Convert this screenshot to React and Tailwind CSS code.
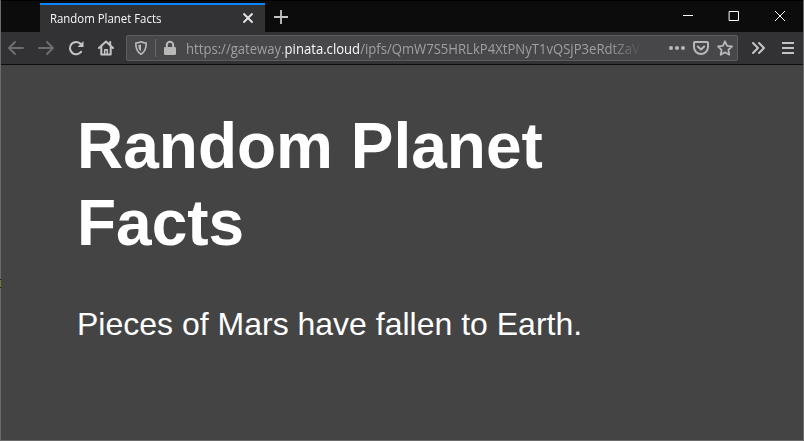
function Icon({ children, className = "" }) {
  return (
    <svg
      viewBox="0 0 16 16"
      width="16"
      height="16"
      fill="none"
      stroke="currentColor"
      strokeWidth="2"
      strokeLinecap="round"
      strokeLinejoin="round"
      className={`block shrink-0 ${className}`}
    >
      {children}
    </svg>
  );
}

function TabBar() {
  return (
    <div className="flex h-8 shrink-0 border-t border-black bg-[#0c0c0d] pl-[39px]">
      <div className="mt-0.5 flex w-[225px] items-center justify-between border-t-2 border-[#0a84ff] bg-[#323234] pr-[9px] pl-[10px]">
        <span className="w-[111px] whitespace-nowrap text-[12px] leading-4 text-[#f9f9fa]">
          <span className="inline-block origin-left scale-x-[0.95]">Random Planet Facts</span>
        </span>
        <Icon className="-mt-px text-[#e8e8e9]">
          <path d="M4 4l8 8M12 4l-8 8" strokeWidth="1.8" />
        </Icon>
      </div>
      <Icon className="mt-2 ml-2 text-[#c4c4c5]">
        <path d="M8 1v14M1 8h14" strokeLinecap="butt" strokeWidth="1.8" />
      </Icon>
      <div className="ml-auto flex text-white">
        <Icon className="mt-[7px] mr-[30px]">
          <path d="M3 7.5h10" strokeWidth="1" strokeLinecap="butt" />
        </Icon>
        <Icon className="mt-[7px] mr-[30px]">
          <path d="M3.5 3.5h9v9h-9z" strokeWidth="1" strokeLinejoin="miter" />
        </Icon>
        <Icon className="mt-[7px] mr-[15px]">
          <path d="M3 3l10 10M13 3L3 13" strokeWidth="1" strokeLinecap="butt" />
        </Icon>
      </div>
    </div>
  );
}

function UrlBar() {
  return (
    <div className="ml-[12px] flex h-[26px] w-[612px] items-center rounded-[2px] border border-[#5c5c5e] bg-[#474749] text-[#b8b8b9]">
      <Icon className="ml-[6px]">
        <path d="M8 1.8c1.6.8 3.3 1.1 5.2 1.2 0 5.200-1 9-5.200 11.200C3.800 12 2.800 8.200 2.800 3 4.700 2.900 6.400 2.600 8 1.800z" strokeWidth="1.7" />
        <path d="M8 4.500v7C6 10 5.300 8 5.200 5.200z" fill="currentColor" stroke="none" />
      </Icon>
      <div className="ml-[6px] h-[18px] w-px bg-[#69696b]" />
      <Icon className="ml-[6px]">
        <path d="M4.800 8V5a3.200 3.200 0 0 1 6.400 0v3" />
        <rect x="2" y="7" width="12" height="8" rx="1.300" fill="currentColor" stroke="none" />
      </Icon>
      <div className="ml-[8px] w-[456px] overflow-hidden pt-px whitespace-nowrap text-[14px] leading-5 text-[#a0a0a2] [mask-image:linear-gradient(to_right,black_0,black_422px,transparent_458px)]">
        <span className="inline-block origin-left scale-x-[0.936]">
          https://gateway.<span className="text-[#f9f9fa]">pinata.cloud</span>/ipfs/QmW7S5HRLkP4XtPNyT1vQSjP3eRdtZaV
        </span>
      </div>
      <div className="ml-auto flex gap-2 pr-[4px]">
        <Icon>
          <g fill="currentColor" stroke="none">
            <circle cx="2" cy="8" r="2" />
            <circle cx="8" cy="8" r="2" />
            <circle cx="14" cy="8" r="2" />
          </g>
        </Icon>
        <Icon>
          <path d="M1.900 2h12.200q.9 0 .9.9v4.300a7 6.800 0 0 1-14 0V2.900q0-.9.9-.9z" />
          <path d="M4.800 6.500L8 9.500l3.200-3" />
        </Icon>
        <Icon>
          <path d="M8 1.300l2.100 4.500 4.900.6-3.600 3.400.9 4.900L8 12.300l-4.300 2.400.9-4.900L1 6.400l4.900-.6z" strokeWidth="1.800" />
        </Icon>
      </div>
    </div>
  );
}

function Toolbar() {
  return (
    <div className="flex h-[33px] shrink-0 items-center border-b border-[#0c0c0d] bg-[#323234] pl-[7px] text-[#c4c4c5]">
      <Icon className="text-[#6d6d6f]">
        <path d="M15 8H1.500M7 2L1 8l6 6" />
      </Icon>
      <Icon className="ml-[14px] text-[#6d6d6f]">
        <path d="M1 8h13.500M9 2l6 6-6 6" />
      </Icon>
      <Icon className="ml-[14px]">
        <path d="M13.200 11.700A6.200 6.200 0 1 1 12.800 4" />
        <path d="M15.500 1v6H9.500z" fill="currentColor" stroke="none" />
      </Icon>
      <Icon className="ml-[14px]">
        <path d="M1 8l7-6.500L15 8" />
        <path d="M3.300 7v7.500h9.400V7" />
        <path d="M6.700 14.500v-4.700h2.600v4.700" strokeWidth="1.500" />
        <path d="M12.200 2v3" />
      </Icon>
      <UrlBar />
      <Icon className="ml-[13px]">
        <path d="M2 3L7 8l-5 5M8 3l5 5-5 5" />
      </Icon>
      <Icon className="ml-[13px]">
        <path d="M2 3h12M2 8h12M2 13h12" strokeLinecap="butt" />
      </Icon>
    </div>
  );
}

export default function App() {
  return (
    <div className="relative h-[441px] w-[804px]">
      <div className="flex h-[441px] w-[804px] flex-col overflow-hidden border-r border-b border-l border-[#6b6b6b] bg-[#444444] font-['Open_Sans','Noto_Sans',sans-serif]">
        <TabBar />
        <Toolbar />
        <main className="w-[600px] pt-[43px] pl-[76px] font-['Liberation_Sans',Arial,sans-serif] text-white">
          <h1 className="text-[64px] leading-[77px] font-bold">Random Planet Facts</h1>
          <p className="mt-[43px] text-[32px] leading-[38px] whitespace-nowrap">Pieces of Mars have fallen to Earth.</p>
        </main>
      </div>
      <div className="absolute top-[279px] left-0 h-[9px] w-px border-y border-[#252515] bg-[#777536]" />
    </div>
  );
}
